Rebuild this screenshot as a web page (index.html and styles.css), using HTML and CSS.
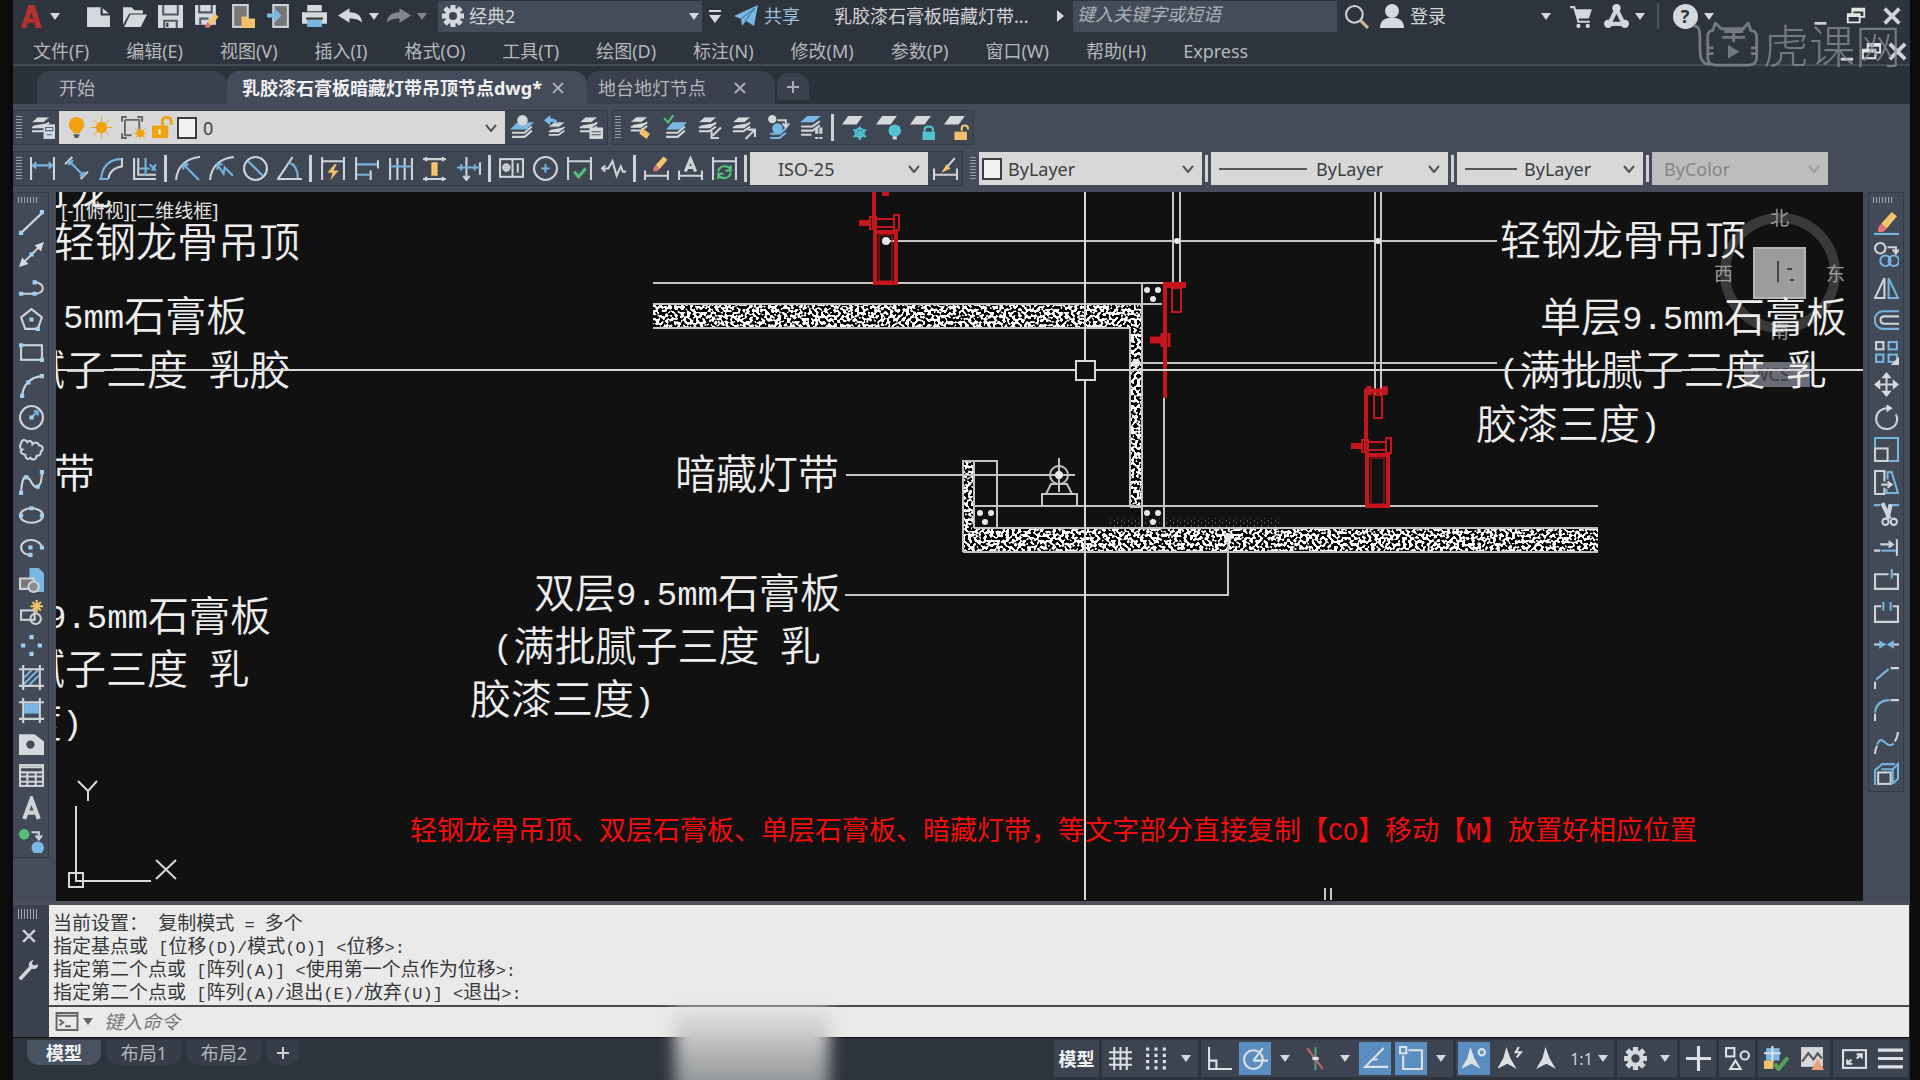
FILE: index.html
```html
<!DOCTYPE html>
<html lang="zh-CN">
<head>
    <meta charset="UTF-8" />
    <meta name="viewport" content="width=device-width, initial-scale=1.0" />
    <title>乳胶漆石膏板暗藏灯带吊顶节点dwg</title>
    <link rel="stylesheet" href="styles.css">
</head>
<body>
    <!-- shared symbols -->
    <svg class="defs" width="0" height="0">
        <symbol id="gear" viewBox="0 0 24 24">
            <g stroke="currentColor" stroke-width="5"><path d="M12 1v22M1 12h22M4 4l16 16M20 4L4 20"/></g>
            <circle cx="12" cy="12" r="8" fill="currentColor" stroke="none"/>
            <circle cx="12" cy="12" r="4" fill="#3c4351" stroke="none"/>
        </symbol>
        <symbol id="chevron" viewBox="0 0 12 8"><path d="M1 1l5 6 5-6" fill="none" stroke="#555" stroke-width="2"/></symbol>
        <symbol id="sheets" viewBox="0 0 24 24">
            <path d="M8 2h13l-7 6H1zM4 11l-3 3h13l7-6" fill="#d5d8dc" stroke="#3e4654" stroke-width="1"/>
            <path d="M2 13h11l7-5M2 17h11l7-5" fill="none" stroke="#d5d8dc" stroke-width="2"/>
        </symbol>
        <symbol id="sheet" viewBox="0 0 24 24"><path d="M7 2h14l-6 8H1z" fill="#d5d8dc" stroke="none"/></symbol>
        <symbol id="pencil" viewBox="0 0 24 24">
            <path d="M7 13L17 2l5 4-10 12z" fill="#f3c66c" stroke="none"/>
            <path d="M7 13l5 5-3 3H4v-4z" fill="#e5747a" stroke="none"/>
        </symbol>
        <symbol id="restore" viewBox="0 0 24 24"><path d="M8 9V4h13v9h-5M3 10h13v9H3zM3 12h13M8 6h13" fill="none" stroke="#e4e4e4" stroke-width="2"/></symbol>
        <symbol id="block" viewBox="0 0 24 24">
            <rect x="2" y="10" width="13" height="9"/><circle cx="16" cy="18" r="5"/>
        </symbol>
        <symbol id="annot" viewBox="0 0 24 24"><path d="M11 1l4 11 6 10-9-5-10 5 6-10z" fill="#dde0e4" stroke="none"/></symbol>
    </svg>

    <div class="app">
        <header class="titlebar">
            <button class="ico" title="应用程序"><svg viewBox="0 0 24 24"><path d="M2 23L9 1h6l7 22h-6l-4-15-5 15zM7 14h9v4H7z" fill="#b5312f" stroke="none"/></svg></button>
            <button class="drop"><i class="caret"></i></button>
            <nav class="quick">
                <button class="ico" title="新建"><svg viewBox="0 0 24 24"><path class="fw" d="M1 3h14l8 7v12H1z"/><path d="M15 3v7h8" stroke="#2e333d"/></svg></button>
                <button class="ico" title="打开"><svg viewBox="0 0 24 24"><path class="fw" d="M1 3h8l3 3h8v3H7L1 20z"/><path class="fw" d="M8 10h16l-6 12H2z"/></svg></button>
                <button class="ico" title="保存"><svg viewBox="0 0 24 24"><path class="fw" d="M0 1h24v22H0z"/><path d="M5 1v9h14V1M6 23v-7h12v7" stroke="#555b66"/><path d="M9 18v4" stroke="#333"/></svg></button>
                <button class="ico" title="另存为"><svg viewBox="0 0 24 24"><path class="fw" d="M1 1h20v19H1z"/><path d="M5 1v7h12V1M6 20v-6h8" stroke="#555b66"/><use href="#pencil" x="8" y="8" width="17" height="17"/></svg></button>
                <button class="ico" title="从移动设备打开"><svg viewBox="0 0 24 24"><rect x="3" y="1" width="14" height="21" fill="#777" /><path class="fo" d="M11 12h5l1 2h7v9H11z"/></svg></button>
                <button class="ico" title="保存到移动设备"><svg viewBox="0 0 24 24"><rect x="7" y="1" width="14" height="21" fill="#777"/><path class="fb" d="M1 9h7V4l7 7-7 7v-5H1z"/></svg></button>
                <button class="ico" title="打印"><svg viewBox="0 0 24 24"><path class="fw" d="M5 1h14v6H5zM0 8h24v11H0z"/><path class="fb" d="M5 15h14v7H5z"/><path d="M4 14h16" stroke="#333"/></svg></button>
                <button class="ico" title="放弃"><svg viewBox="0 0 24 24"><path class="fw" d="M0 11l11-7v4c8 0 12 4 12 10-3-3-6-4-12-4v4z"/></svg></button>
                <button class="drop"><i class="caret"></i></button>
                <button class="ico dim" title="重做"><svg viewBox="0 0 24 24"><path class="fw" d="M24 11L13 4v4C5 8 1 12 1 18c3-3 6-4 12-4v4z"/></svg></button>
                <button class="drop"><i class="caret"></i></button>
            </nav>
            <div class="workspace-box">
                <svg><use href="#gear"/></svg>
                <select aria-label="工作空间"><option>经典2</option></select>
                <i class="caret"></i>
            </div>
            <button class="drop more" title="自定义"><i class="line"></i><i class="caret"></i></button>
            <button class="share"><svg viewBox="0 0 24 24"><path class="fb" d="M0 12L24 1l-4 21-8-5-4 5-1-7z"/><path d="M7 15L21 4 11 17" stroke="#376a96" stroke-width="1"/></svg>共享</button>
            <span class="doc-title">乳胶漆石膏板暗藏灯带...</span>
            <i class="caret east"></i>
            <input class="search" type="text" placeholder="键入关键字或短语" aria-label="搜索">
            <button class="ico" title="搜索"><svg viewBox="0 0 24 24"><circle cx="10" cy="10" r="8"/><path d="M16 16l7 7" stroke="#c8b99a" stroke-width="3"/></svg></button>
            <button class="login"><svg viewBox="0 0 24 24"><circle class="fw" cx="12" cy="7" r="7"/><path class="fw" d="M0 24c0-7 4-9 8-10h8c4 1 8 3 8 10z"/></svg>登录</button>
            <div class="title-right">
                <button class="drop"><i class="caret"></i></button>
                <button class="ico" title="购物车"><svg viewBox="0 0 24 24"><path d="M2 3h4l4 14h11"/><path class="fw" d="M6 5h17l-3 9H9z"/><circle class="fw" cx="10" cy="21" r="2"/><circle class="fw" cx="19" cy="21" r="2"/></svg></button>
                <button class="ico" title="应用"><svg viewBox="0 0 24 24"><path d="M12 5L5 19h14z" stroke-width="4"/><circle class="fw" cx="12" cy="4" r="4"/><circle class="fw" cx="4" cy="19" r="4"/><circle class="fw" cx="20" cy="19" r="4"/></svg></button>
                <button class="drop"><i class="caret"></i></button>
                <span class="vline"></span>
                <button class="ico help" title="帮助"><span>?</span></button>
                <button class="drop"><i class="caret"></i></button>
                <div class="win">
                    <button class="ico" title="最小化"><svg viewBox="0 0 24 24"><path d="M6 20h13" stroke-width="3"/></svg></button>
                    <button class="ico" title="还原"><svg><use href="#restore"/></svg></button>
                    <button class="ico" title="关闭"><svg viewBox="0 0 24 24"><path d="M4 4l16 16M20 4L4 20" stroke-width="4"/></svg></button>
                </div>
            </div>
        </header>

        <nav class="menubar">
            <a href="#">文件(F)</a>
            <a href="#">编辑(E)</a>
            <a href="#">视图(V)</a>
            <a href="#">插入(I)</a>
            <a href="#">格式(O)</a>
            <a href="#">工具(T)</a>
            <a href="#">绘图(D)</a>
            <a href="#">标注(N)</a>
            <a href="#">修改(M)</a>
            <a href="#">参数(P)</a>
            <a href="#">窗口(W)</a>
            <a href="#">帮助(H)</a>
            <a href="#">Express</a>
            <div class="doc-win">
                <button title="最小化"><svg viewBox="0 0 24 24"><path d="M7 20h13" stroke-width="3"/></svg></button>
                <button title="还原"><svg><use href="#restore"/></svg></button>
                <button title="关闭"><svg viewBox="0 0 24 24"><path d="M4 4l16 16M20 4L4 20" stroke-width="4"/></svg></button>
            </div>
        </nav>

        <div class="file-tabs">
            <button class="file-tab start">开始</button>
            <button class="file-tab active">乳胶漆石膏板暗藏灯带吊顶节点dwg*<svg viewBox="0 0 12 12"><path d="M1 1l10 10M11 1L1 11"/></svg></button>
            <button class="file-tab other">地台地灯节点<svg viewBox="0 0 12 12"><path d="M1 1l10 10M11 1L1 11"/></svg></button>
            <button class="file-tab plus"><svg viewBox="0 0 12 12"><path d="M6 0v12M0 6h12"/></svg></button>
        </div>

        <div class="toolbars">
            <div class="bar-row">
                <div class="bar">
                    <span class="grip"></span>
                    <button class="tool" title="图层特性"><svg viewBox="0 0 24 24"><use href="#sheets" width="22" height="22"/><path class="fw" d="M13 9h11v14H13z"/><path d="M15 12h7v3h-7zM16 19h5" stroke="#3f6f98" stroke-width="1"/></svg></button>
                    <div class="combo layer">
                        <svg viewBox="0 0 24 24"><circle cx="12" cy="9" r="8" fill="#f0a311"/><path d="M8 15h8v3H8z" fill="#f0a311"/><path d="M9 20h6M10 22h4" stroke="#555" stroke-width="2"/></svg>
                        <svg viewBox="0 0 24 24"><circle cx="12" cy="12" r="6" fill="#f0a311"/><path d="M12 1v22M1 12h22M4 4l16 16M20 4L4 20" stroke="#f0a311" stroke-width="1"/></svg>
                        <svg class="wide" viewBox="0 0 28 24"><path d="M2 6V1h5M18 1h5v5M2 18v5h5M5 4h15v10M5 4v16h7" fill="none" stroke="#666" stroke-width="2"/><circle cx="21" cy="18" r="4" fill="#f0a311"/><path d="M21 11v13M14 18h14M16 13l10 10M26 13L16 23" stroke="#f0a311" stroke-width="1"/></svg>
                        <svg viewBox="0 0 24 24"><path d="M1 10h17v13H1z" fill="#f0a311"/><path d="M12 10V5c0-5 9-5 9 0v4" fill="none" stroke="#f0a311" stroke-width="3"/><path d="M9 14v5" stroke="#fff" stroke-width="2"/></svg>
                        <span class="swatch"></span>
                        <select aria-label="图层"><option>0</option></select>
                        <svg class="chev"><use href="#chevron"/></svg>
                    </div>
                    <button class="tool" title="置为当前"><svg viewBox="0 0 24 24"><path d="M2 17h12l7-6M2 21h12l7-6"/><path class="fb" d="M7 7h16l-7 7H0z"/><circle class="fw" cx="12" cy="5" r="5"/></svg></button>
                    <button class="tool" title="上一个图层"><svg viewBox="0 0 24 24"><use href="#sheets" x="3" y="5" width="20" height="20"/><path class="fb" d="M0 5l6-5v3c5 0 7 2 7 6-2-2-4-3-7-2v3z"/></svg></button>
                    <button class="tool" title="图层状态"><svg viewBox="0 0 24 24"><use href="#sheets" width="22" height="22"/><path class="fw" d="M11 12h13v11H11z"/><path d="M13 16h9M13 19h9" stroke="#555" stroke-width="1"/></svg></button>
                </div>
                <div class="bar">
                    <span class="grip"></span>
                    <button class="tool" title="图层隔离"><svg viewBox="0 0 24 24"><use href="#sheets" width="21" height="21"/><path class="fo" d="M12 12l8 6-3 5-7-5z"/></svg></button>
                    <button class="tool" title="匹配图层"><svg viewBox="0 0 24 24"><path d="M3 17h11l7-6M3 21h11l7-6"/><path class="fb" d="M9 7h14l-6 7H3z"/><path d="M1 3l4 4 5-7" stroke="#55c07a"/></svg></button>
                    <button class="tool" title="移到当前图层"><svg viewBox="0 0 24 24"><use href="#sheets" width="22" height="22"/><path d="M23 12l-8 8M14 15v7h7"/></svg></button>
                    <button class="tool" title="复制到图层"><svg viewBox="0 0 24 24"><use href="#sheets" width="22" height="22"/><path d="M14 23l8-8M16 14h7v7"/></svg></button>
                    <button class="tool" title="图层漫游"><svg viewBox="0 0 24 24"><path d="M5 18h9l6-5M5 22h9l6-5" class="bl"/><circle class="fw" cx="7" cy="4" r="4"/><circle class="fb" cx="12" cy="13" r="5"/><path d="M12 5h8v6M17 8l3 4 3-4"/></svg></button>
                    <button class="tool" title="视口冻结"><svg viewBox="0 0 24 24"><path d="M2 11h11l7-5M2 15h11l7-5M2 19h10"/><path class="fb" d="M8 1h13l-7 6H1z"/><path d="M17 12v6M21 12v6M17 21v2M21 21v2" stroke-width="3"/></svg></button>
                    <span class="sep"></span>
                    <button class="tool" title="冻结"><svg viewBox="0 0 24 24"><use href="#sheet" width="24" height="24" x="-1" y="-1"/><path d="M17 11v13M11 14l12 7M23 14l-12 7" class="cy"/><circle cx="17" cy="17" r="4" class="cy" /></svg></button>
                    <button class="tool" title="关闭图层"><svg viewBox="0 0 24 24"><use href="#sheet" width="24" height="24" x="-1" y="-1"/><circle class="fc" cx="18" cy="15" r="6"/><path d="M16 22h4" stroke-width="3"/></svg></button>
                    <button class="tool" title="锁定"><svg viewBox="0 0 24 24"><use href="#sheet" width="24" height="24" x="-1" y="-1"/><path class="fc" d="M12 16h12v8H12z"/><path d="M14 16v-2c0-4 8-4 8 0v2" class="cy"/></svg></button>
                    <button class="tool" title="解锁"><svg viewBox="0 0 24 24"><use href="#sheet" width="24" height="24" x="-1" y="-1"/><path class="fo" d="M10 16h12v8H10z"/><path d="M17 15v-2c0-4 6-4 6 0v1" stroke="#f3c66c"/></svg></button>
                </div>
            </div>

            <div class="bar-row">
                <div class="bar">
                    <span class="grip"></span>
                    <button class="tool" title="线性"><svg viewBox="0 0 24 24"><path d="M1 1v22M23 1v22"/><path class="bl" d="M2 9h20M6 6L3 9l3 3M18 6l3 3-3 3"/></svg></button>
                    <button class="tool" title="对齐"><svg viewBox="0 0 24 24"><path d="M1 8l7-7M16 22l7-7"/><path class="bl" d="M5 5l14 14M5 9V5h4M19 15v4h-4"/></svg></button>
                    <button class="tool" title="弧长"><svg viewBox="0 0 24 24"><path d="M10 22c1-7 5-11 13-12V2"/><path class="bl" d="M3 22C4 10 11 3 22 3M1 22h9"/></svg></button>
                    <button class="tool" title="坐标"><svg viewBox="0 0 24 24"><path d="M2 2v20h21M6 2v16h17"/><path class="bl" d="M13 2v17M7 12h10M17 8l6 6M23 8l-4 6"/></svg></button>
                    <span class="sep"></span>
                    <button class="tool" title="半径"><svg viewBox="0 0 24 24"><path d="M1 23C2 10 11 2 24 1"/><path class="bl" d="M8 8l15 15M8 13V8h5"/></svg></button>
                    <button class="tool" title="折弯"><svg viewBox="0 0 24 24"><path d="M1 23C2 10 11 2 24 1"/><path class="bl" d="M8 8l6 9 1-6 8 8M8 13V8h5"/></svg></button>
                    <button class="tool" title="直径"><svg viewBox="0 0 24 24"><circle cx="12" cy="12" r="11"/><path class="bl" d="M5 5l14 14"/></svg></button>
                    <button class="tool" title="角度"><svg viewBox="0 0 24 24"><path d="M15 1L1 22h23"/><path class="bl" d="M11 6c6 2 9 7 9 15"/></svg></button>
                    <span class="sep"></span>
                    <button class="tool" title="快速"><svg viewBox="0 0 24 24"><path d="M2 1v22M23 1v22M2 5h21"/><path class="fo" d="M14 8l-7 8h5l-2 7 8-9h-5l3-6z"/></svg></button>
                    <button class="tool" title="基线"><svg viewBox="0 0 24 24"><path d="M2 1v22M23 4v8M16 14v9"/><path class="bl" d="M3 8h19M3 18h12"/></svg></button>
                    <button class="tool" title="连续"><svg viewBox="0 0 24 24"><path d="M2 2v21M9 2v21M16 2v21M23 2v21"/><path class="bl" d="M2 10h21"/></svg></button>
                    <button class="tool" title="等距"><svg viewBox="0 0 24 24"><path d="M1 3h22M1 22h22M4 1v4M20 1v4M4 20v4M20 20v4"/><path d="M12 6v13" stroke="#f3c66c" stroke-width="6"/></svg></button>
                    <button class="tool" title="折断"><svg viewBox="0 0 24 24"><path d="M10 1v22M23 6v12M7 19l3 4 3-4"/><path class="bl" d="M1 11h22M5 8v6M18 8v6"/></svg></button>
                    <span class="sep"></span>
                    <button class="tool" title="公差"><svg viewBox="0 0 24 24"><rect x="1" y="3" width="22" height="17"/><path d="M13 3v17M4 11h7M7 8v7M18 7v9"/><circle cx="7" cy="11" r="3"/></svg></button>
                    <button class="tool" title="圆心标记"><svg viewBox="0 0 24 24"><circle cx="12" cy="12" r="11"/><path class="bl" d="M12 8v8M8 12h8"/></svg></button>
                    <button class="tool" title="检验"><svg viewBox="0 0 24 24"><path d="M1 1v22M23 1v22M1 5h22"/><path d="M7 15l4 5 7-8" stroke="#55c07a" stroke-width="3"/></svg></button>
                    <button class="tool" title="折弯线性"><svg viewBox="0 0 24 24"><path d="M1 12h6l4-7 4 14 4-9 2 5h3M4 9l-3 3 3 3"/></svg></button>
                    <span class="sep"></span>
                    <button class="tool" title="编辑标注"><svg viewBox="0 0 24 24"><path d="M1 14v9M23 14v9M1 19h22"/><use href="#pencil" x="6" y="-1" width="18" height="18"/></svg></button>
                    <button class="tool" title="编辑标注文字"><svg viewBox="0 0 24 24"><path d="M1 14v9M23 14v9M1 19h22"/><path d="M7 15l5-12 5 12M9 11h6" stroke-width="3"/></svg></button>
                    <button class="tool" title="更新"><svg viewBox="0 0 24 24"><path d="M1 1v22M23 1v22M1 5h22"/><path d="M6 15c1-6 9-7 12-2M18 16c-1 6-9 7-12 2M18 9v5h-5M6 22v-5h5" stroke="#55c07a"/></svg></button>
                    <span class="sep"></span>
                    <div class="combo dimstyle">
                        <select aria-label="标注样式"><option>ISO-25</option></select>
                        <svg class="chev"><use href="#chevron"/></svg>
                    </div>
                    <button class="tool" title="标注样式"><svg viewBox="0 0 24 24"><path d="M1 12v11M23 12v11M1 18h22M21 2l-8 9" /><path class="fo" d="M13 8l4 4-9 4z"/></svg></button>
                </div>
                <div class="bar props">
                    <span class="grip"></span>
                    <div class="combo color">
                        <span class="swatch"></span>
                        <select aria-label="颜色"><option>ByLayer</option></select>
                        <svg class="chev"><use href="#chevron"/></svg>
                    </div>
                    <span class="sep"></span>
                    <div class="combo linetype">
                        <span class="sample"></span>
                        <select aria-label="线型"><option>ByLayer</option></select>
                        <svg class="chev"><use href="#chevron"/></svg>
                    </div>
                    <span class="sep"></span>
                    <div class="combo weight">
                        <span class="sample"></span>
                        <select aria-label="线宽"><option>ByLayer</option></select>
                        <svg class="chev"><use href="#chevron"/></svg>
                    </div>
                    <span class="sep"></span>
                    <div class="combo plot off">
                        <select aria-label="打印样式" disabled><option>ByColor</option></select>
                        <svg class="chev"><use href="#chevron"/></svg>
                    </div>
                </div>
            </div>
        </div>

        <main class="work">
            <aside class="side left">
                <div class="side-bar draw">
                    <span class="grip"></span>
                    <button title="直线"><svg viewBox="0 0 24 24"><path d="M3 21L22 3"/><path class="pt" d="M2 22h0M22 2h0"/></svg></button>
                    <button title="构造线"><svg viewBox="0 0 24 24"><path d="M3 21L21 3"/><path class="fw" d="M24 0l-3 9-6-6zM0 24l3-9 6 6z"/><path class="pt" d="M12 12h0"/></svg></button>
                    <button title="多段线"><svg viewBox="0 0 24 24"><path d="M2 18h13c11 0 10-11 0-11"/><path class="pt" d="M2 18h0M15 18h0M15 7h0"/></svg></button>
                    <button title="多边形"><svg viewBox="0 0 24 24"><path d="M12 2l10 8-4 11H6L2 10z"/><path class="pt" d="M12 12h0M18 21h0"/></svg></button>
                    <button title="矩形"><svg viewBox="0 0 24 24"><rect x="2" y="5" width="20" height="14"/><path class="pt" d="M2 5h0M22 19h0"/></svg></button>
                    <button title="圆弧"><svg viewBox="0 0 24 24"><path d="M3 22C4 12 10 4 22 3"/><path class="pt" d="M3 22h0M9 9h0M22 3h0"/></svg></button>
                    <button title="圆"><svg viewBox="0 0 24 24"><circle cx="12" cy="12" r="11"/><path class="bl" d="M12 12l6-6M14 6h4v4"/><path class="pt" d="M12 12h0"/></svg></button>
                    <button title="修订云线"><svg viewBox="0 0 24 24"><path d="M2 5c1-5 5-3 6-1 2-2 5-1 5 2 3-3 6-1 6 1 4 0 5 4 2 6 0 4-2 4-4 4-1 5-5 4-6 2-4 3-5-1-5-3-5-1-5-4-3-5-3-1-2-4-1-6z"/></svg></button>
                    <button title="样条曲线"><svg viewBox="0 0 24 24"><path d="M2 22C3 2 8 4 12 12s10 5 10-10"/><path class="pt" d="M2 22h0M7 7h0M18 16h0M22 2h0"/></svg></button>
                    <button title="椭圆"><svg viewBox="0 0 24 24"><ellipse cx="12" cy="12" rx="11" ry="7"/><path class="pt" d="M2 12h0M12 5h0M22 12h0"/></svg></button>
                    <button title="椭圆弧"><svg viewBox="0 0 24 24"><path d="M22 12C20 2 2 3 2 12c0 4 4 7 8 7"/><path class="pt" d="M11 12h0M22 12h0M11 19h0"/></svg></button>
                    <button title="插入块"><svg viewBox="0 0 24 24"><path class="fb" d="M10 0h9l5 5v18H10z"/><path d="M1 10h13v10H1z" fill="#777"/><circle cx="14" cy="18" r="5" fill="#8a8d92"/></svg></button>
                    <button title="创建块"><svg viewBox="0 0 24 24"><use href="#block"/><path d="M17 0v12M11 6h12M13 2l8 8M21 2l-8 8" stroke="#f3c66c"/></svg></button>
                    <button title="点"><svg viewBox="0 0 24 24"><path class="pt" d="M12 4h0M4 12h0M20 12h0M12 20h0"/></svg></button>
                    <button title="图案填充"><svg viewBox="0 0 24 24"><path class="bl" d="M5 12l7-7M5 18L18 5M10 19l9-9"/><path d="M4 0v24M20 0v24M0 4h24M0 20h24"/></svg></button>
                    <button title="渐变色"><svg viewBox="0 0 24 24"><path class="fb" d="M5 5h14v10H5z"/><path d="M4 0v24M20 0v24M0 4h24M0 20h24"/></svg></button>
                    <button title="面域"><svg viewBox="0 0 24 24"><path class="fw" d="M0 3h15l9 7v13H0z"/><circle cx="11" cy="13" r="4" fill="#444b59" stroke="none"/></svg></button>
                    <button title="表格"><svg viewBox="0 0 24 24"><rect x="1" y="2" width="22" height="20"/><path d="M1 4h22M1 9h22M1 13h22M1 18h22M8 9v13M16 9v13"/></svg></button>
                    <button title="多行文字"><svg viewBox="0 0 24 24"><path d="M5 22l7-19 7 19M8 16h9" stroke-width="4"/></svg></button>
                    <button title="添加选定对象"><svg viewBox="0 0 24 24"><circle cx="5" cy="6" r="5" fill="#55c07a" stroke="none"/><circle class="fb" cx="18" cy="19" r="6"/><path d="M12 4h7v6M16 7l3 4 3-4"/></svg></button>
                </div>
            </aside>

            <section class="canvas">
                <svg class="drawing">
                    <defs>
                        <filter id="gypsum" x="0" y="0" width="100%" height="100%" color-interpolation-filters="sRGB">
                            <feTurbulence type="fractalNoise" baseFrequency="0.32" numOctaves="1" seed="7"/>
                            <feColorMatrix values="14 0 0 0 -6.4  14 0 0 0 -6.4  14 0 0 0 -6.4  0 0 0 0 1"/>
                        </filter>
                        <pattern id="dots" width="7" height="5" patternUnits="userSpaceOnUse"><path d="M1 1h1M4 3h1" stroke="#999" stroke-width="1"/></pattern>
                        <g id="hanger">
                            <path d="M0 -64v64" stroke-width="4"/>
                            <path d="M1 2h21v51H1z" stroke-width="4"/>
                            <path d="M5 5h13v46H5z" stroke-width="1"/>
                            <path d="M-4 -13h6v12h-6zM20 -15h5v15h-5zM2 -11h18M2 -3h18" stroke-width="2"/>
                            <path d="M-15 -7h12M-10 -10v6" stroke-width="6"/>
                        </g>
                    </defs>
                    <g transform="translate(-56 -192)">
                        <!-- view cube -->
                        <g class="cube">
                            <circle cx="1780" cy="273" r="55" fill="none" stroke="#393939" stroke-width="10"/>
                            <rect x="1754" y="248" width="51" height="50" fill="#9c9c9c" stroke="#b5b5b5"/>
                            <path d="M1778 261v21M1787 269h5M1790 280h4" stroke="#444" stroke-width="2"/>
                            <rect x="1744" y="362" width="66" height="25" fill="#6a6b76"/>
                            <text x="1752" y="381" class="wcs">WCS</text>
                            <text x="1770" y="225">北</text>
                            <text x="1714" y="281">西</text>
                            <text x="1826" y="281">东</text>
                            <text x="1770" y="338">南</text>
                        </g>

                        <!-- gypsum boards -->
                        <rect x="653" y="304" width="489" height="24" filter="url(#gypsum)"/>
                        <rect x="1130" y="304" width="12" height="203" filter="url(#gypsum)"/>
                        <rect x="963" y="461" width="11" height="70" filter="url(#gypsum)"/>
                        <rect x="963" y="528" width="635" height="24" filter="url(#gypsum)"/>
                        <rect x="1110" y="518" width="170" height="9" fill="url(#dots)"/>

                        <g class="lines">
                            <path d="M653 283h510M653 304h509M653 328h477M1130 328v179M1142 283v224h-12"/>
                            <path d="M1142 507v21M1164 283v245M963 552V461h34v67M974 461v67"/>
                            <path d="M975 506h623M974 528h624M963 552h635"/>
                            <path d="M1173 192v91M1180 192v91M1375 192v203M1381 192v203M1325 888v12M1331 888v12"/>
                            <path d="M885 241h612M1136 363h361M846 475h229M845 595h383v-58"/>
                            <circle cx="1059" cy="475" r="9"/>
                            <path d="M1059 458v34M1051 484h16l5 10h-26zM1042 506v-12h35v12"/>
                        </g>
                        <g class="nodes">
                            <circle cx="886" cy="241" r="4"/><circle cx="1177" cy="241" r="3"/><circle cx="1378" cy="241" r="3"/>
                            <circle cx="1136" cy="363" r="4"/><circle cx="1228" cy="537" r="4"/><circle cx="1059" cy="475" r="4"/>
                            <circle cx="1147" cy="290" r="3"/><circle cx="1158" cy="290" r="3"/><circle cx="1153" cy="299" r="3"/>
                            <circle cx="1147" cy="513" r="3"/><circle cx="1158" cy="513" r="3"/><circle cx="1153" cy="522" r="3"/>
                            <circle cx="980" cy="513" r="3"/><circle cx="991" cy="513" r="3"/><circle cx="985" cy="522" r="3"/>
                        </g>

                        <!-- steel keel hangers -->
                        <g class="keel">
                            <use href="#hanger" x="874" y="230"/>
                            <path d="M882 194h7" stroke-width="4"/>
                            <use href="#hanger" x="1366" y="453"/>
                            <path d="M1364 391h24M1369 386v9M1385 386v9" stroke-width="5"/>
                            <path d="M1374 395h8v23h-8z" stroke-width="2"/>
                            <path d="M1165 283v115" stroke-width="4"/>
                            <path d="M1163 285h23" stroke-width="6"/>
                            <path d="M1172 288h9v24h-9z" stroke-width="2"/>
                            <path d="M1162 333v14M1169 333v14" stroke-width="3"/>
                            <path d="M1150 340h14" stroke-width="7"/>
                        </g>

                        <g class="note">
                            <text x="30" y="205">灯龙</text>
                            <text x="54" y="257">轻钢龙骨吊顶</text>
                            <text x="63" y="331"><tspan>5mm</tspan>石膏板</text>
                            <text x="24" y="385">腻子三度<tspan> </tspan>乳胶</text>
                            <text x="54" y="488">带</text>
                            <text x="46" y="631"><tspan>9.5mm</tspan>石膏板</text>
                            <text x="24" y="684">腻子三度<tspan> </tspan>乳</text>
                            <text x="21" y="737">度<tspan>)</tspan></text>
                            <text x="675" y="489">暗藏灯带</text>
                            <text x="534" y="608">双层<tspan>9.5mm</tspan>石膏板</text>
                            <text x="493" y="661"><tspan>(</tspan>满批腻子三度<tspan> </tspan>乳</text>
                            <text x="470" y="714">胶漆三度<tspan>)</tspan></text>
                            <text x="1500" y="255">轻钢龙骨吊顶</text>
                            <text x="1540" y="332">单层<tspan>9.5mm</tspan>石膏板</text>
                            <text x="1499" y="385"><tspan>(</tspan>满批腻子三度<tspan> </tspan>乳</text>
                            <text x="1476" y="439">胶漆三度<tspan>)</tspan></text>
                        </g>
                        <text class="view-label" x="61" y="218">[-][俯视][二维线框]</text>
                        <text class="caption" x="410" y="840">轻钢龙骨吊顶、双层石膏板、单层石膏板、暗藏灯带，等文字部分直接复制【<tspan>CO</tspan>】移动【<tspan>M</tspan>】放置好相应位置</text>

                        <!-- UCS icon and crosshair -->
                        <g class="ucs">
                            <path d="M76 806v75h75M69 873h14v14H69zM78 781l10 10 9-10M88 791v10M156 860l20 19M176 860l-20 19"/>
                        </g>
                        <g class="cross">
                            <path d="M1085 192v169M1085 380v520M56 370h1020M1095 370h768M1076 361h19v19h-19z"/>
                        </g>
                    </g>
                </svg>
            </section>

            <aside class="side right">
                <div class="side-bar modify">
                    <span class="grip"></span>
                    <button title="删除"><svg viewBox="0 0 24 24"><use href="#pencil" width="24" height="24"/><path class="bl" d="M0 23h24"/></svg></button>
                    <button title="复制"><svg viewBox="0 0 24 24"><circle cx="6" cy="6" r="5"/><path d="M13 5h8v5M18 7l3 4 3-4"/><circle class="bl" cx="11" cy="18" r="5"/><circle class="bl" cx="19" cy="18" r="5"/></svg></button>
                    <button title="镜像"><svg viewBox="0 0 24 24"><path d="M10 3v19H1z"/><path class="bl" d="M14 3v19h9z"/></svg></button>
                    <button title="偏移"><svg viewBox="0 0 24 24"><path class="bl" d="M24 4H9c-11 0-11 17 0 17h15"/><path d="M24 9H10c-5 0-5 7 0 7h14"/></svg></button>
                    <button title="阵列"><svg viewBox="0 0 24 24"><rect x="2" y="2" width="7" height="7"/><g class="bl"><rect x="14" y="2" width="8" height="7"/><rect x="2" y="14" width="7" height="7"/><rect x="14" y="14" width="8" height="7"/></g><path class="fw" d="M24 16v8h-8z"/></svg></button>
                    <button title="移动"><svg viewBox="0 0 24 24"><path d="M12 3v18M3 12h18"/><path class="fw" d="M12 0l5 6H7zM12 24l5-6H7zM0 12l6-5v10zM24 12l-6-5v10z"/></svg></button>
                    <button title="旋转"><svg viewBox="0 0 24 24"><path d="M13 3C-2 4-1 23 12 23c9 0 12-8 9-14"/><path class="fw" d="M12-1l6 4-6 4z"/></svg></button>
                    <button title="缩放"><svg viewBox="0 0 24 24"><path class="bl" d="M1 10V1h22v22h-9"/><rect x="1" y="11" width="12" height="12"/></svg></button>
                    <button title="拉伸"><svg viewBox="0 0 24 24"><path d="M10 11V1H1v22h9v-6M7 14h9M13 11l4 3-4 3"/><path class="bl" d="M13 9V2h4l6 20H12v-4"/></svg></button>
                    <button title="修剪"><svg viewBox="0 0 24 24"><path class="bl" d="M0 3h6M17 3h7" /><path d="M8 1l7 15M16 2l-3 14" stroke-width="4"/><circle cx="11" cy="19" r="3"/><circle cx="19" cy="19" r="3"/></svg></button>
                    <button title="延伸"><svg viewBox="0 0 24 24"><path d="M22 4v16M6 9h12M14 6l4 3-4 3M0 15h6"/><path class="bl" d="M7 15h14"/></svg></button>
                    <button title="打断于点"><svg viewBox="0 0 24 24"><path d="M14 7H1v14h22V7h-5"/><path class="bl" d="M17 2v9"/></svg></button>
                    <button title="打断"><svg viewBox="0 0 24 24"><path d="M7 6H1v15h22V6h-5"/><path class="bl" d="M9 2v8M16 2v8"/></svg></button>
                    <button title="合并"><svg viewBox="0 0 24 24"><path d="M0 12h6M18 12h6"/><path class="fb" d="M5 8l7 4-7 4zM19 8l-7 4 7 4z"/></svg></button>
                    <button title="倒角"><svg viewBox="0 0 24 24"><path d="M1 23v-7M16 3h8"/><path class="bl" d="M2 14L14 4"/></svg></button>
                    <button title="圆角"><svg viewBox="0 0 24 24"><path d="M1 23v-7M16 3h8"/><path class="bl" d="M1 15C2 7 7 3 15 3"/></svg></button>
                    <button title="光顺曲线"><svg viewBox="0 0 24 24"><path d="M1 23c0-4 1-6 2-8M20 11c2-3 3-5 3-9"/><path class="bl" d="M3 14C8 2 12 20 19 13"/></svg></button>
                    <button title="分解"><svg viewBox="0 0 24 24"><rect x="4" y="10" width="12" height="11"/><path class="bl" d="M1 22V8l7-6h12M7 7h11l5-5v14l-5 5M18 7v14"/></svg></button>
                </div>
            </aside>
        </main>

        <footer class="bottom">
            <section class="command">
                <div class="command-side">
                    <span class="grip"></span>
                    <button title="关闭"><svg viewBox="0 0 12 12"><path d="M1 1l10 10M11 1L1 11" stroke-width="2"/></svg></button>
                    <button title="自定义"><svg viewBox="0 0 24 24"><path d="M2 22L14 9" stroke-width="4"/><path d="M17 1c-7 1-7 10 0 10 3 0 5-2 5-5l-5 1-2-2z" class="fw"/></svg></button>
                </div>
                <div class="command-main">
                    <div class="history">
                        <p>当前设置：<span> </span>复制模式<span> = </span>多个</p>
                        <p>指定基点或<span> [</span>位移<span>(D)/</span>模式<span>(O)] &lt;</span>位移<span>&gt;:</span></p>
                        <p>指定第二个点或<span> [</span>阵列<span>(A)] &lt;</span>使用第一个点作为位移<span>&gt;:</span></p>
                        <p>指定第二个点或<span> [</span>阵列<span>(A)/</span>退出<span>(E)/</span>放弃<span>(U)] &lt;</span>退出<span>&gt;:</span></p>
                    </div>
                    <div class="prompt">
                        <svg viewBox="0 0 24 20"><path d="M1 1h22v18H1zM1 4h22M4 8l4 3-4 3M10 15h6" fill="none" stroke="#666" stroke-width="2"/></svg>
                        <i class="caret"></i>
                        <input type="text" placeholder="键入命令" aria-label="命令">
                    </div>
                </div>
            </section>

            <div class="status">
                <nav class="layouts">
                    <button class="active">模型</button>
                    <button>布局1</button>
                    <button>布局2</button>
                    <button class="plus"><svg viewBox="0 0 12 12"><path d="M6 0v12M0 6h12"/></svg></button>
                </nav>
                <div class="status-tools">
                    <div class="group"><button class="model">模型</button></div>
                    <div class="group">
                        <button title="栅格"><svg viewBox="0 0 24 24"><path d="M6 1v22M12 1v22M18 1v22M1 6h22M1 12h22M1 18h22"/></svg></button>
                        <button title="捕捉"><svg viewBox="0 0 24 24"><path d="M2 3h20M2 9h20M2 15h20M2 21h20" stroke-width="3" stroke-dasharray="3 5"/></svg></button>
                        <button class="arrow"><i class="caret"></i></button>
                    </div>
                    <div class="group">
                        <button title="正交"><svg viewBox="0 0 24 24"><path d="M2 1v21h22M2 14h7v8"/></svg></button>
                        <button class="on" title="极轴"><svg viewBox="0 0 24 24"><circle cx="10" cy="13" r="9"/><path d="M10 14h14M10 14l9-12"/></svg></button>
                        <button class="arrow"><i class="caret"></i></button>
                        <button title="等轴测"><svg viewBox="0 0 24 24"><path d="M12 1v22" stroke="#55a07a"/><path d="M4 2l15 20" stroke="#c4646c"/><path d="M9 12h6" stroke-width="3"/></svg></button>
                        <button class="arrow"><i class="caret"></i></button>
                        <button class="on" title="追踪"><svg viewBox="0 0 24 24"><path d="M20 2L2 20h22M9 13h5"/></svg></button>
                        <button class="on" title="对象捕捉"><svg viewBox="0 0 24 24"><path d="M9 4h13v18H4V9"/><rect x="1" y="1" width="6" height="6"/></svg></button>
                        <button class="arrow"><i class="caret"></i></button>
                    </div>
                    <div class="group">
                        <button class="on" title="注释可见性"><svg viewBox="0 0 24 24"><use href="#annot" width="24" x="-3"/><circle cx="19" cy="6" r="3"/></svg></button>
                        <button title="自动缩放"><svg viewBox="0 0 24 24"><use href="#annot" width="24" x="-3"/><path d="M20 1l-3 5h5l-4 5"/></svg></button>
                        <button title="注释比例"><svg viewBox="0 0 24 24"><use href="#annot"/></svg></button>
                        <button class="scale">1:1<i class="caret"></i></button>
                    </div>
                    <div class="group">
                        <button title="切换工作空间"><svg><use href="#gear"/></svg></button>
                        <button class="arrow"><i class="caret"></i></button>
                    </div>
                    <div class="group"><button title="注释监视器"><svg viewBox="0 0 24 24"><path d="M12 0v24M0 12h24" stroke-width="3"/></svg></button></div>
                    <div class="group"><button title="隔离对象"><svg viewBox="0 0 24 24"><rect x="1" y="2" width="8" height="8"/><circle cx="19" cy="9" r="4"/><path d="M10 14l5 8H5z"/></svg></button></div>
                    <div class="group">
                        <button title="硬件加速"><svg viewBox="0 0 24 24"><path class="fb" d="M2 2h13v12H2z"/><path d="M8 0v16M0 7h16"/><path class="fo" d="M0 14h9v8H0z"/><path d="M10 17l4 5 9-11" stroke="#55a05a" stroke-width="4"/></svg></button>
                        <button title="图形"><svg viewBox="0 0 24 24"><path class="fw" d="M1 1h21v19H1z"/><path d="M2 15l6-8 5 6 4-6 4 5" stroke="#555"/><path d="M17 12l6 11H11z" fill="#ee9e77" stroke="none"/></svg></button>
                    </div>
                    <div class="group last">
                        <button title="全屏"><svg viewBox="0 0 24 24"><rect x="1" y="4" width="22" height="17"/><path d="M14 8h5v4M19 8l-5 4M5 13v4h5M5 17l4-4"/></svg></button>
                        <button title="自定义"><svg viewBox="0 0 24 24"><path d="M0 4h24M0 12h24M0 20h24" stroke-width="3"/></svg></button>
                    </div>
                </div>
            </div>
            <div class="smudge"></div>
        </footer>

        <div class="watermark">
            <svg viewBox="0 0 70 48"><path d="M1 4c9 0 6 10 7 26 0 10 3 14 10 14M16 14c0-3 2-5 5-5l3-8 6 6h23l5-6 3 8c4 0 6 3 6 7v21c0 5-3 8-8 8H24c-5 0-8-3-8-8zM33 10h20M31 16h24M43 8v13M16 27h6M16 33h6M61 27h6M61 33h6"/><path d="M37 24l12 7-12 7z" class="play"/></svg>
            <span>虎课网</span>
        </div>
    </div>
</body>
</html>
```
FILE: styles.css
```css
* {
    box-sizing: border-box;
}

body {
    margin: 0;
    background: #0b0b0c;
    color: #d2d4d7;
    font-family: "Noto Sans", "Noto Sans CJK SC", sans-serif;
    font-size: 18px;
    line-height: 24px;
}

button {
    display: flex;
    align-items: center;
    justify-content: center;
    margin: 0;
    padding: 0;
    border: none;
    background: none;
    color: inherit;
    font: inherit;
    white-space: nowrap;
}

select,
input {
    margin: 0;
    border: none;
    background: none;
    color: inherit;
    font: inherit;
    min-width: 0;
}

select {
    appearance: none;
    flex: 1;
    opacity: 1;
}

a {
    color: inherit;
    text-decoration: none;
}

svg {
    flex: none;
    fill: none;
    stroke: #cfd3d8;
    stroke-width: 2;
}

.defs {
    position: absolute;
}

.bl { stroke: #74b4df; }
.cy { stroke: #4fc4cf; }
.fw { fill: #d5d8dc; stroke: none; }
.fb { fill: #78b8e2; stroke: none; }
.fo { fill: #f3c06c; stroke: none; }
.fc { fill: #4fc4cf; stroke: none; }
.pt { stroke: #9fd2f2; stroke-width: 4; stroke-linecap: square; }

.app {
    position: relative;
    display: flex;
    flex-direction: column;
    min-height: 100vh;
    margin: 0 10px 0 13px;
    background: #2e343d;
}

.caret {
    flex: none;
    border: 5px solid transparent;
    border-top: 7px solid #d5d8dc;
    border-bottom: none;
}

.caret.east {
    border: 6px solid transparent;
    border-left: 7px solid #d5d8dc;
    border-right: none;
}

/* title bar */
.titlebar {
    display: flex;
    align-items: center;
    height: 32px;
}

.ico {
    width: 36px;
    height: 30px;
}

.ico svg {
    width: 25px;
    height: 25px;
}

.ico.dim,
.dim + .drop {
    opacity: 0.5;
}

.drop {
    width: 12px;
    height: 30px;
}

.quick {
    display: flex;
    margin-left: 19px;
}

.workspace-box {
    display: flex;
    align-items: center;
    width: 264px;
    height: 31px;
    margin-left: 10px;
    padding: 0 3px;
    background: #434c59;
}

.workspace-box svg {
    width: 24px;
    height: 24px;
    color: #d5d8dc;
    margin-right: 4px;
}

.drop.more {
    flex-direction: column;
    gap: 3px;
    width: 26px;
}

.more .line {
    width: 12px;
    height: 2px;
    background: #d5d8dc;
}

.more .caret {
    border-width: 8px 6px 0;
}

.share,
.login {
    gap: 6px;
    margin-left: 6px;
}

.share {
    color: #9bbfdd;
}

.share svg,
.login svg {
    width: 24px;
    height: 24px;
}

.doc-title {
    flex: none;
    width: 194px;
    margin: 0 29px 0 34px;
    white-space: nowrap;
}

.search {
    width: 264px;
    height: 31px;
    margin: 0 1px 0 9px;
    padding: 0 4px 4px;
    background: #434c59;
    font-style: italic;
}

.search::placeholder {
    color: #a9aeb5;
}

.title-right {
    display: flex;
    align-items: center;
    margin-left: auto;
}

.title-right .drop:first-child {
    margin-right: 10px;
}

.vline {
    width: 2px;
    height: 26px;
    margin: 0 8px 0 11px;
    background: #4a525e;
}

.help span {
    width: 25px;
    height: 25px;
    border-radius: 50%;
    background: #d5d8dc;
    color: #2e343d;
    font-weight: bold;
}

.win {
    display: flex;
    margin-left: 87px;
}

.win svg {
    width: 22px;
    height: 22px;
}

/* menu bar */
.menubar {
    display: flex;
    align-items: center;
    gap: 37px;
    height: 34px;
    padding: 6px 0 0 20px;
    border-bottom: 2px solid #434a54;
    color: #b4b7bc;
    white-space: nowrap;
}

.doc-win {
    display: flex;
    gap: 3px;
    margin-left: auto;
    padding-right: 1px;
}

.doc-win svg {
    width: 23px;
    height: 23px;
}

/* file tabs */
.file-tabs {
    display: flex;
    align-items: flex-end;
    height: 38px;
    padding-left: 24px;
    background: #2b3139;
}

.file-tab {
    justify-content: flex-start;
    height: 33px;
    border-radius: 12px 14px 0 0;
    background: #3a404d;
    color: #b4b7bc;
}

.file-tab svg {
    width: 12px;
    height: 12px;
    stroke: #a9adb3;
}

.file-tab.start {
    width: 190px;
    padding-left: 22px;
}

.file-tab.active {
    width: 360px;
    padding-left: 15px;
    gap: 10px;
    background: #444b5a;
    color: #f0f1f2;
    font-weight: bold;
}

.file-tab.other {
    width: 188px;
    padding-left: 11px;
    gap: 28px;
}

.file-tab.plus {
    justify-content: center;
    width: 32px;
    height: 27px;
    margin: 0 0 4px 2px;
}

/* toolbars */
.toolbars {
    display: flex;
    flex-direction: column;
    gap: 6px;
    padding: 6px 0;
    background: #454b59;
}

.bar-row {
    display: flex;
    gap: 4px;
}

.bar {
    display: flex;
    align-items: center;
    height: 35px;
    padding-left: 2px;
    border: 1px solid #343b48;
    background: #3f4755;
}

.bar.props {
    border-color: #454b59;
    background: none;
}

.grip {
    flex: none;
    width: 6px;
    height: 24px;
    margin-right: 3px;
    background: repeating-linear-gradient(#9ba0a8 0 1px, transparent 1px 3px);
}

.tool {
    width: 34px;
    height: 33px;
}

.tool svg {
    width: 25px;
    height: 25px;
}

.sep {
    flex: none;
    width: 9px;
    height: 27px;
    border-left: 3px solid transparent;
    border-right: 3px solid transparent;
    background: #cfd1d4;
    background-clip: padding-box;
}

.combo {
    display: flex;
    align-items: center;
    height: 33px;
    padding: 0 8px;
    background: #d8d8d8;
    color: #3c3d40;
}

.combo svg {
    width: 23px;
    height: 23px;
    stroke: none;
}

.combo .wide {
    width: 27px;
    margin: 0 2px 0 5px;
}

.combo .chev {
    width: 12px;
    height: 8px;
}

.combo.layer {
    width: 446px;
    gap: 2px;
    padding-left: 6px;
}

.swatch {
    flex: none;
    width: 20px;
    height: 22px;
    border: 2px solid #3c3d40;
    background: #f2f2f2;
}

.layer .swatch {
    margin: 0 4px 0 1px;
}

.sample {
    flex: none;
    height: 2px;
    background: #55565a;
}

.dimstyle {
    width: 178px;
    padding-left: 28px;
}

.color {
    width: 223px;
    padding-left: 3px;
    gap: 6px;
}

.linetype {
    width: 237px;
    gap: 9px;
}

.linetype .sample {
    width: 88px;
}

.weight {
    width: 186px;
    gap: 7px;
}

.weight .sample {
    width: 52px;
}

.plot {
    width: 176px;
    padding-left: 12px;
}

.combo.off {
    background: #bcbdbc;
    color: #85868a;
}

.combo.off select {
    opacity: 1;
}

.combo.off .chev {
    opacity: 0.3;
}

/* drawing area */
.work {
    display: flex;
    flex: 1;
    border-bottom: 4px solid #4a4f58;
    background: #454b59;
}

.side {
    flex: none;
    width: 43px;
}

.side.right {
    width: 47px;
    padding-left: 5px;
}

.side-bar {
    display: flex;
    flex-direction: column;
    width: 36px;
    border: 1px solid #343b48;
    background: #424957;
}

.side-bar.draw {
    height: 666px;
}

.side-bar.modify {
    height: 600px;
}

.side-bar button {
    flex: 1;
    min-height: 0;
}

.side-bar svg {
    width: 25px;
    height: 25px;
}

.side-bar .grip,
.command-side .grip {
    width: 21px;
    height: 6px;
    margin: 4px auto 3px 4px;
    background: repeating-linear-gradient(90deg, #a4a8ae 0 1px, transparent 1px 3px);
}

.canvas {
    position: relative;
    flex: 1;
    min-width: 0;
    overflow: hidden;
    background: #111;
}

.drawing {
    position: absolute;
    width: 100%;
    height: 100%;
    stroke: none;
}

.lines {
    fill: none;
    stroke: #c4c4c4;
    stroke-width: 2;
}

.nodes {
    fill: #e8e8e8;
}

.keel {
    fill: none;
    stroke: #c4161c;
}

.note {
    fill: #ededed;
    font-family: "Noto Sans CJK SC", sans-serif;
    font-size: 41px;
    font-weight: 350;
    white-space: pre;
}

.note tspan {
    font-family: "Liberation Mono", monospace;
    font-size: 34px;
    baseline-shift: 3px;
}

.cube text {
    fill: #9a9a9a;
    font-size: 19px;
}

.cube .wcs {
    fill: #3c3d45;
    font-size: 18px;
}

.view-label {
    fill: #e2e2e2;
    font-size: 19px;
}

.caption {
    fill: #f50d0d;
    font-family: "Noto Sans CJK SC", sans-serif;
    font-size: 27px;
}

.caption tspan {
    font-family: "Liberation Mono", monospace;
    font-size: 25px;
}

.ucs,
.cross {
    fill: none;
    stroke: #d8d8d8;
    stroke-width: 2;
}

/* command window */
.bottom {
    position: relative;
    overflow: hidden;
}

.command {
    display: flex;
    height: 133px;
    border-bottom: 1px solid #111;
}

.command-side {
    display: flex;
    flex-direction: column;
    align-items: center;
    width: 36px;
    background: #3a404d;
}

.command-side .grip {
    height: 10px;
    margin: 4px auto 8px 5px;
}

.command-side button {
    width: 32px;
    height: 18px;
    margin: 0 4px 16px 0;
}

.command-side button svg {
    width: 14px;
    height: 14px;
}

.command-side button + button svg {
    width: 22px;
    height: 22px;
}

.command-main {
    flex: 1;
    margin-right: 1px;
    background: #eaeaea;
    color: #37383a;
}

.history {
    padding: 5px 0 3px 4px;
    border-bottom: 2px solid #4a4b4d;
    font-family: "Noto Sans CJK SC", sans-serif;
    font-size: 19px;
    line-height: 23px;
}

.history p {
    height: 23px;
    margin: 0;
    white-space: pre;
}

.history span {
    font-family: "Liberation Mono", monospace;
    font-size: 17px;
}

.prompt {
    display: flex;
    align-items: center;
    gap: 4px;
    height: 29px;
    padding-left: 6px;
}

.prompt svg {
    width: 24px;
    height: 19px;
}

.prompt .caret {
    border-top-color: #666;
}

.prompt input {
    flex: 1;
    padding: 0 0 0 7px;
    font-size: 19px;
    font-style: italic;
}

.prompt input::placeholder {
    color: #77787a;
}

/* status bar */
.status {
    display: flex;
    align-items: flex-start;
    justify-content: space-between;
    height: 42px;
    padding: 2px 2px 0 14px;
}

.layouts {
    display: flex;
    gap: 6px;
}

.layouts button {
    width: 74px;
    height: 25px;
    border-radius: 0 0 12px 12px;
    background: #363d48;
    color: #b4b7bc;
}

.layouts .active {
    background: #475361;
    color: #f0f1f2;
    font-weight: bold;
}

.layouts .plus {
    width: 32px;
}

.layouts svg {
    width: 12px;
    height: 12px;
}

.status-tools,
.group {
    display: flex;
}

.status-tools {
    gap: 3px;
}

.group {
    height: 37px;
    background: #3c4452;
}

.group.last {
    padding-left: 3px;
}

.group button {
    width: 36px;
    border: 2px solid transparent;
    background-clip: padding-box;
}

.group svg {
    width: 25px;
    height: 25px;
    color: #d5d8dc;
    stroke: #dde0e4;
}

.group .on {
    background-color: #5a8dc0;
}

.group .arrow {
    width: 24px;
}

.group .model {
    width: 45px;
    color: #f0f1f2;
    font-weight: bold;
}

.group .scale {
    width: 50px;
    gap: 5px;
    font-size: 16px;
}

.smudge {
    position: absolute;
    left: 662px;
    bottom: -24px;
    width: 154px;
    height: 96px;
    background: linear-gradient(#e4e4e4, #bcbcbc 40%, #8f9396 80%);
    filter: blur(8px);
}

.watermark {
    position: absolute;
    top: 22px;
    right: 9px;
    display: flex;
    align-items: center;
    gap: 3px;
    height: 46px;
    color: #8a9097;
    font-size: 46px;
    font-weight: 300;
    line-height: 46px;
    opacity: 0.75;
    pointer-events: none;
}

.watermark svg {
    width: 68px;
    height: 46px;
    stroke: #8a9097;
    stroke-width: 3;
}

.watermark .play {
    fill: #8a9097;
    stroke: none;
}
```
